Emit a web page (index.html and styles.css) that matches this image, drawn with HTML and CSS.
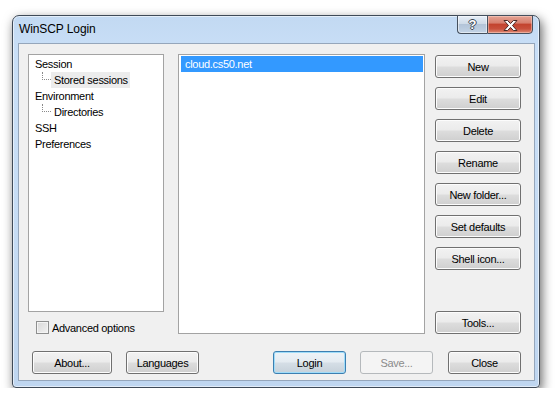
FILE: index.html
```html
<!DOCTYPE html>
<html>
<head>
<meta charset="utf-8">
<title>WinSCP Login</title>
<link rel="stylesheet" href="styles.css">
</head>
<body>
<div class="stage">
  <div class="window">
    <div class="titlebar">
      <span class="title">WinSCP Login</span>
      <div class="caption-btns">
        <div class="cap help"><span class="q">?</span></div>
        <div class="cap close">
          <svg width="15" height="11" viewBox="0 0 15 11"><path d="M1 0.5h3.6l2.9 3.1 2.9-3.1h3.6l-4.5 5 4.5 5h-3.6l-2.9-3.1-2.9 3.1h-3.6l4.5-5z" fill="#fff" stroke="#4a2a26" stroke-width="1" stroke-linejoin="round"/></svg>
        </div>
      </div>
    </div>
    <div class="client">
      <div class="toprow">
        <div class="treecol">
          <div class="tree">
            <div class="node">Session</div>
            <div class="node child"><span class="conn"></span><span class="lbl sel">Stored sessions</span></div>
            <div class="node">Environment</div>
            <div class="node child"><span class="conn"></span><span class="lbl">Directories</span></div>
            <div class="node">SSH</div>
            <div class="node">Preferences</div>
          </div>
          <label class="check"><span class="box"></span><span>Advanced options</span></label>
        </div>
        <div class="list">
          <div class="item active">cloud.cs50.net</div>
        </div>
        <div class="sidebtns">
          <div class="btn">New</div>
          <div class="btn">Edit</div>
          <div class="btn">Delete</div>
          <div class="btn">Rename</div>
          <div class="btn">New folder...</div>
          <div class="btn">Set defaults</div>
          <div class="btn">Shell icon...</div>
          <div class="btn tools">Tools...</div>
        </div>
      </div>
      <div class="bottomrow">
        <div class="btn about">About...</div>
        <div class="btn lang">Languages</div>
        <div class="btn def login">Login</div>
        <div class="btn dis save">Save...</div>
        <div class="btn close-btn">Close</div>
      </div>
    </div>
  </div>
</div>
</body>
</html>
```
FILE: styles.css
```css
* { box-sizing: border-box; }
html, body { margin: 0; padding: 0; background: #fff; }
body {
  font-family: "Liberation Sans", Arial, sans-serif;
  font-size: 11px;
  color: #000;
  letter-spacing: -0.3px;
}
.stage {
  padding: 15px 0 0 12px;
}
.window {
  width: 528px;
  height: 373px;
  border: 1px solid #3f4a57;
  border-radius: 7px 7px 4px 4px;
  background: linear-gradient(180deg, #c2d9f2 0%, #c9dff7 10%, #c6dcf4 60%, #bfd6f0 100%);
  box-shadow: 2px 4px 11px rgba(0,0,0,0.6), inset 0 0 0 1px rgba(255,255,255,0.55);
  display: flex;
  flex-direction: column;
}
.titlebar {
  height: 27px;
  display: flex;
  align-items: flex-start;
  padding-left: 6px;
}
.title {
  line-height: 27px;
  font-size: 12px;
  letter-spacing: -0.1px;
  color: #000;
  flex: 1;
}
.caption-btns {
  display: flex;
  margin-top: -1px;
  margin-right: 6px;
}
.cap {
  height: 19px;
  border: 1px solid #45505e;
  display: flex;
  align-items: center;
  justify-content: center;
}
.help {
  width: 30px;
  border-right: none;
  border-radius: 0 0 0 4px;
  background: linear-gradient(180deg, #e6eef7 0%, #cfdbe8 45%, #b3c4d8 50%, #c2d3e6 100%);
  box-shadow: inset 0 0 0 1px rgba(255,255,255,0.5);
}
.help .q {
  font-family: "Liberation Sans", Arial, sans-serif;
  font-weight: bold;
  font-size: 13px;
  color: #fff;
  letter-spacing: 0;
  text-shadow: 1px 0 0 #3b4552, -1px 0 0 #3b4552, 0 1px 0 #3b4552, 0 -1px 0 #3b4552;
  line-height: 1;
}
.close {
  width: 46px;
  border-radius: 0 0 4px 0;
  background: linear-gradient(180deg, #e5a494 0%, #d7806f 40%, #c3442f 50%, #c8503c 75%, #df8a73 100%);
  box-shadow: inset 0 0 0 1px rgba(255,220,210,0.45);
}
.close svg { display: block; margin-top: 1px; }

.client {
  margin: 0 4px 5px 5px;
  height: 338px;
  border: 1px solid #95a6bb;
  background: #f0f0f0;
  padding: 10px 13px 0 9px;
  display: flex;
  flex-direction: column;
}
.toprow {
  display: flex;
  height: 280px;
}
.treecol {
  width: 136px;
  display: flex;
  flex-direction: column;
}
.tree {
  height: 259px;
  background: #fff;
  border: 1px solid #a3a3a3;
  padding: 1px 0 0 6px;
}
.node {
  height: 16px;
  line-height: 16px;
  white-space: nowrap;
}
.node.child {
  display: flex;
  align-items: flex-start;
}
.conn {
  width: 9px;
  height: 8px;
  margin-left: 7px;
  border-left: 1px dotted #8a8a8a;
  border-bottom: 1px dotted #8a8a8a;
}
.lbl {
  padding: 0 3px;
  height: 16px;
  width: 79px;
}
.lbl.sel { background: #ececec; }
.check {
  display: flex;
  align-items: center;
  margin-top: 9px;
  padding-left: 8px;
  height: 13px;
}
.box {
  width: 13px;
  height: 13px;
  border: 1px solid #8e8f8f;
  background: linear-gradient(135deg, #d8d8d8 0%, #f2f2f2 100%);
  box-shadow: inset 0 0 0 1px #f4f4f4;
  margin-right: 3px;
}
.list {
  margin-left: 14px;
  width: 247px;
  height: 280px;
  background: #fff;
  border: 1px solid #a3a3a3;
  padding: 1px 1px 0 2px;
}
.item {
  height: 16px;
  line-height: 16px;
  padding-left: 4px;
}
.item.active { background: #3399ff; color: #fff; }

.sidebtns {
  margin-left: 10px;
  width: 86px;
  display: flex;
  flex-direction: column;
  gap: 9px;
  padding-top: 1px;
}
.btn {
  height: 23px;
  border: 1px solid #707070;
  border-radius: 3px;
  background: linear-gradient(180deg, #f2f2f2 0%, #ebebeb 48%, #dddddd 52%, #cfcfcf 100%);
  box-shadow: inset 0 0 0 1px #fcfcfc;
  display: flex;
  align-items: center;
  justify-content: center;
  white-space: nowrap;
  color: #000;
}
.btn.tools { margin-top: auto; }
.bottomrow {
  display: flex;
  margin-top: 17px;
}
.about { width: 80px; margin-left: 4px; }
.lang { width: 73px; margin-left: 14px; }
.login { width: 73px; margin-left: 74px; }
.save { width: 73px; margin-left: 14px; }
.close-btn { width: 73px; margin-left: 15px; }
.btn.def {
  border-color: #3c7fb1;
  background: linear-gradient(180deg, #eef3f7 0%, #e4ebf1 48%, #d5dee6 52%, #c6d1da 100%);
  box-shadow: inset 0 0 0 1px #9fdcf9;
}
.btn.dis {
  border-color: #b5b9bc;
  background: #f4f4f4;
  box-shadow: none;
  color: #8b8b8b;
}
```
